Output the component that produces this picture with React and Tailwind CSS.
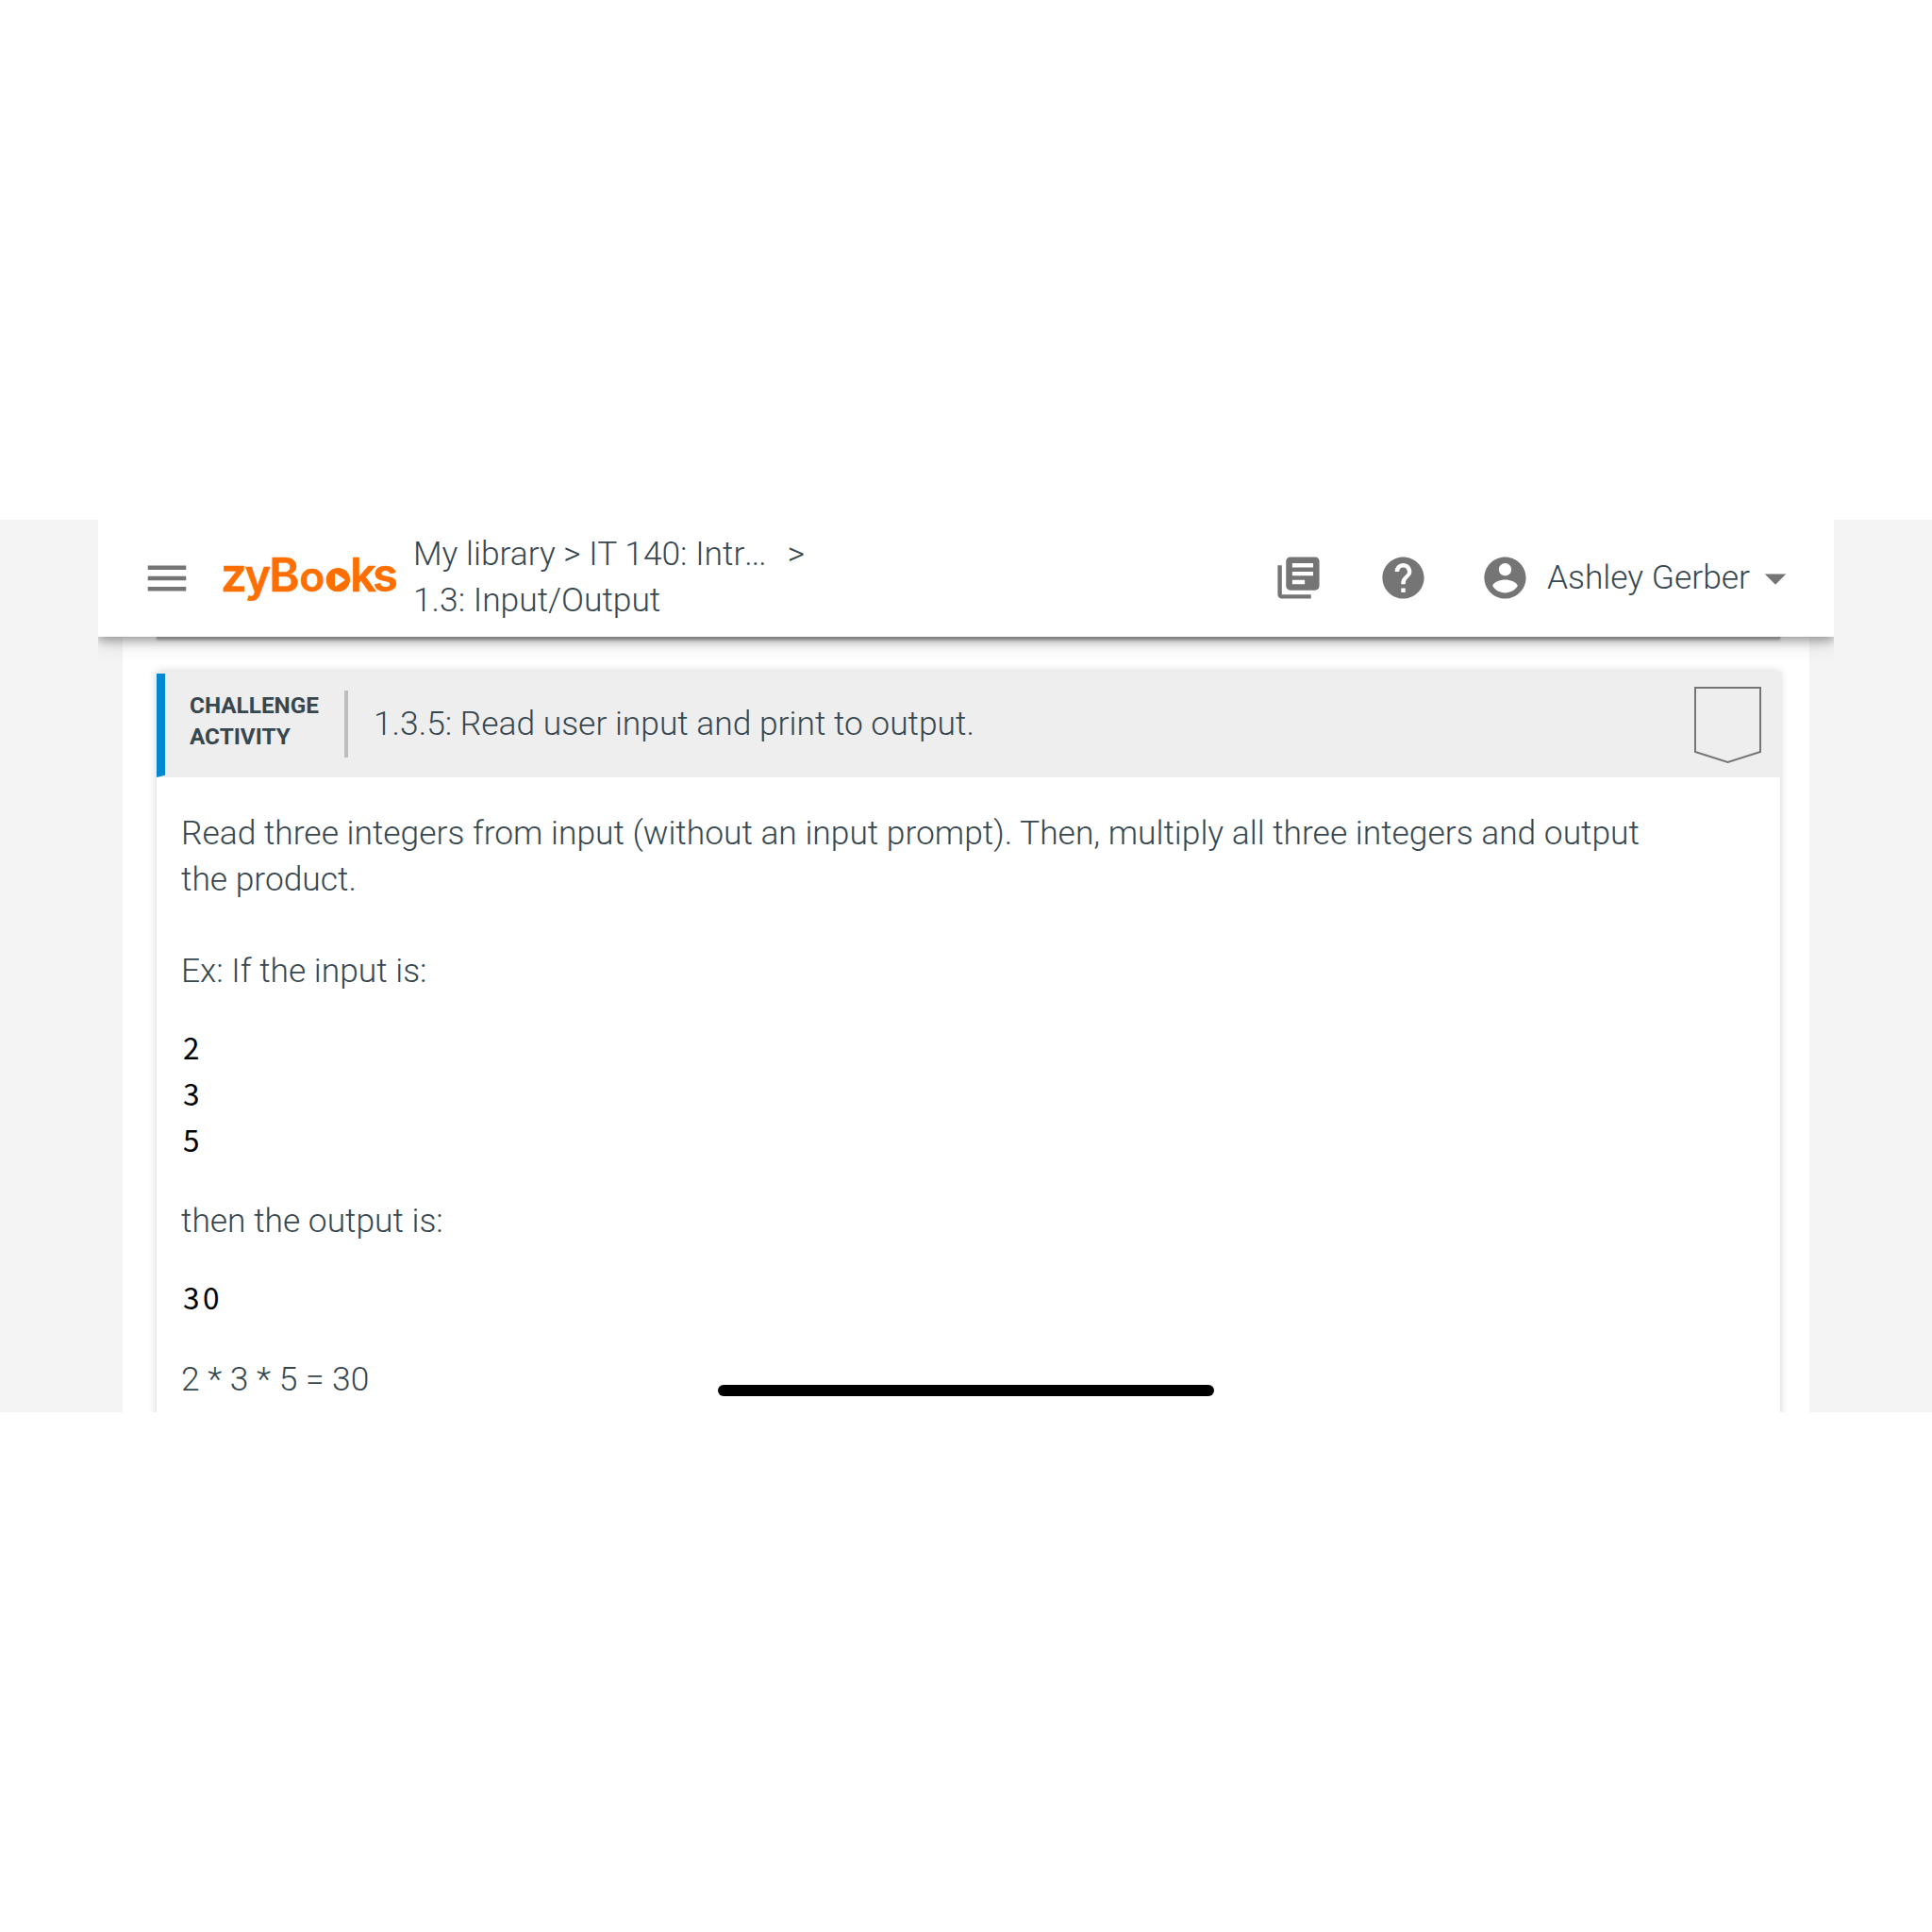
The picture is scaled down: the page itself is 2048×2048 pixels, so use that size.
import React from "react";
import { MdMenu, MdLibraryBooks, MdHelp, MdArrowDropDown } from "react-icons/md";

function Logo() {
  return (
    <svg width="205" height="60" viewBox="0 0 205 60" className="ml-[21px] shrink-0 overflow-visible fill-[#ff6f00]">
      <text
        y="43.5"
        className="stroke-[#ff6f00] font-['Inter',sans-serif] text-[49px] font-semibold"
        strokeWidth="0.5"
        strokeLinejoin="round"
      >
        <tspan x="9">z</tspan>
        <tspan x="34.5" className="text-[47px]">y</tspan>
        <tspan x="60.3">B</tspan>
        <tspan x="92.3 119.5" className="text-[44.5px]">oo</tspan>
        <tspan x="146.1 170.1">ks</tspan>
      </text>
      {/* Play button inside the second o */}
      <circle cx="133.4" cy="31.5" r="12.6" />
      <path d="M131 26v11.500l8.500-5.750z" className="fill-white stroke-white" strokeWidth="2" strokeLinejoin="round" />
    </svg>
  );
}

function AccountIcon() {
  return (
    <svg width="53" height="53" viewBox="0 0 24 24" fill="currentColor" className="shrink-0">
      <path d="M12 2C6.48 2 2 6.48 2 12s4.48 10 10 10 10-4.48 10-10S17.52 2 12 2zm0 3c1.66 0 3 1.34 3 3s-1.34 3-3 3-3-1.34-3-3 1.34-3 3-3zm0 14.2c-2.5 0-4.71-1.28-6-3.22.03-1.99 4-3.08 6-3.08 1.99 0 5.97 1.09 6 3.08-1.29 1.94-3.5 3.22-6 3.22z" />
    </svg>
  );
}

function Header() {
  return (
    <header className="relative z-10 flex h-[124px] items-center bg-white pl-[46px] text-[#757575] shadow-[0_4px_10px_rgba(0,0,0,0.3),0_2px_24px_rgba(0,0,0,0.2)]">
      <MdMenu size={54} className="shrink-0" />
      <Logo />
      <nav className="ml-[8px] w-[460px] pb-[2px] whitespace-nowrap text-[#37474f]">
        <div>
          My library &gt; IT 140: Intr<span className="tracking-[-1px]">...</span>
          <span className="ml-[23px]">&gt;</span>
        </div>
        <div>1.3: Input/Output</div>
      </nav>
      <div className="ml-auto flex items-center pr-[35px] pb-px">
        <MdLibraryBooks size={53} />
        <MdHelp size={53} className="ml-[58px]" />
        <div className="ml-[55px] flex items-center">
          <AccountIcon />
          <span className="ml-[18px] pb-px whitespace-nowrap text-[#37474f]">Ashley Gerber</span>
          <MdArrowDropDown size={54} />
        </div>
      </div>
    </header>
  );
}

function ChallengeHeader() {
  return (
    <div className="flex h-[112px] w-[1723px] bg-[#eee]">
      <div className="mt-[2px] w-[9px] bg-[#0288d1] [clip-path:polygon(0_0,100%_0,100%_98%,0_100%)]" />
      <div className="ml-[26px] w-[164px] pt-[19px] text-[24.3px] leading-[33px] font-bold text-[#37474f]">
        <div>CHALLENGE</div>
        <div>ACTIVITY</div>
      </div>
      <div className="mt-[20px] h-[71px] w-[4px] bg-[#bdbdbd]" />
      <h1 className="ml-[27px] pt-[31px] text-[#37474f]">1.3.5: Read user input and print to output.</h1>
      <svg width="72" height="84" viewBox="0 0 72 84" className="mt-[15px] mr-[22px] ml-auto" fill="none">
        <path d="M2 2H71V70L36.500 81L2 70Z" stroke="#757575" strokeWidth="2" />
      </svg>
    </div>
  );
}

function CodeBlock({ children }) {
  return (
    <pre className="mt-[32px] pl-[2px] font-['Noto_Sans_CJK_SC',sans-serif] text-[31.5px] font-normal tracking-[3.6px] text-black">
      {children}
    </pre>
  );
}

export default function App() {
  return (
    <div className="h-[2048px] w-[2048px] bg-white pt-[551px] font-['Roboto',sans-serif] text-[35.36px] leading-[48.76px] font-light">
      <div className="relative flex h-[946px] justify-center overflow-hidden bg-[#f4f4f4]">
        <div className="w-[1840px] overflow-hidden">
          <Header />
          <main className="mx-[26px] h-[822px] bg-white px-[36px]">
            {/* Bottom edge of the previous activity */}
            <div className="h-[2px] w-[1721px] bg-[#bbb] shadow-[0_1px_3px_rgba(0,0,0,0.4)]" />
            <section className="mt-[35px] h-[800px] w-[1721px] bg-white shadow-[0_0_9px_rgba(0,0,0,0.18)]">
              <ChallengeHeader />
              <div className="px-[26px] pt-[35px] text-[#37474f]">
                <p className="w-[1600px]">
                  Read three integers from input (without an input prompt). Then, multiply all three integers and output
                  <br />
                  the product.
                </p>
                <p className="mt-[48px]">Ex: If the input is:</p>
                <CodeBlock>{"2\n3\n5"}</CodeBlock>
                <p className="mt-[38px]">then the output is:</p>
                <CodeBlock>30</CodeBlock>
                <p className="mt-[39px]">2 * 3 * 5 = 30</p>
              </div>
            </section>
          </main>
        </div>
        {/* Home indicator */}
        <div className="absolute top-[917px] left-[761px] z-20 h-[12px] w-[526px] rounded-full bg-black" />
      </div>
    </div>
  );
}
